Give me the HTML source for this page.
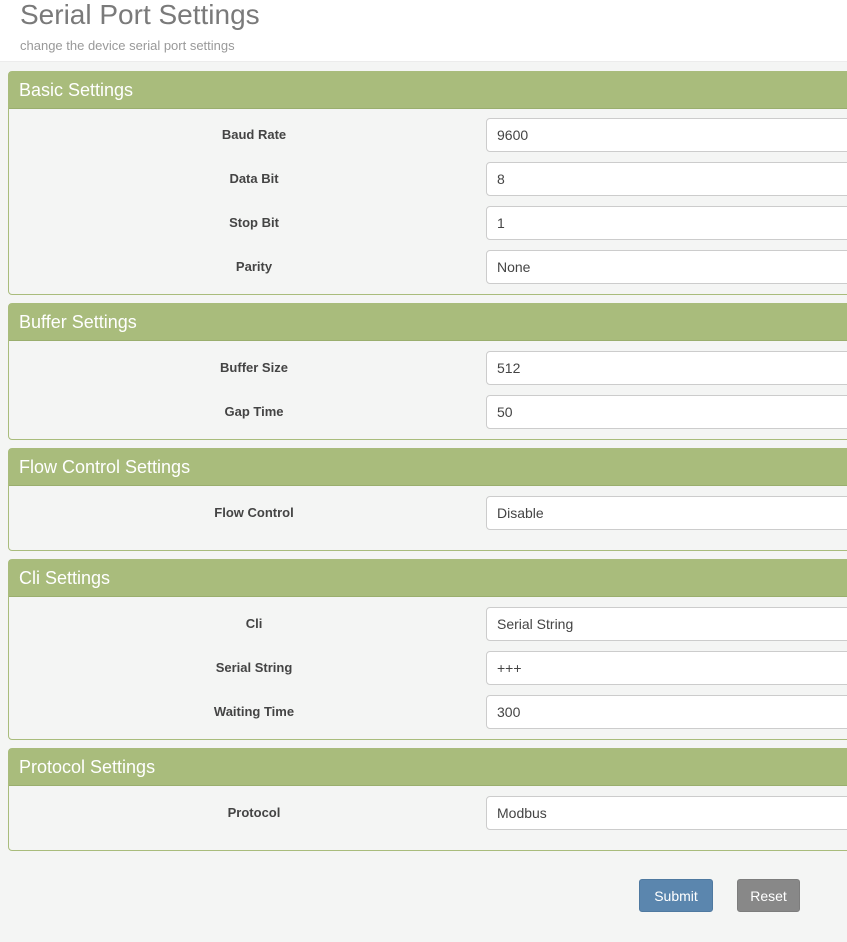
<!DOCTYPE html>
<html><head><style>
body{margin:0;width:847px;height:942px;background:#f4f5f4;font-family:"Liberation Sans",sans-serif;overflow:hidden;position:relative}
.hd{position:absolute;left:0;top:0;width:847px;height:61px;background:#fff;border-bottom:1px solid #ececec}
.t{position:absolute;left:20px;top:-1px;font-size:28px;color:#7a7a7a;font-weight:300}
.s{position:absolute;left:20px;top:38px;font-size:13px;color:#999}
.p{position:absolute;left:8px;width:860px;border:1px solid #a9bc7c;border-radius:4px;background:#f4f5f4;box-sizing:border-box}
.ph{height:37px;background:#a9bc7c;color:#fff;font-size:18px;line-height:36px;padding-left:10px;border-bottom:1px solid #9aae6e;box-sizing:border-box}
.r{position:absolute;left:0;width:860px;height:34px}
.l{position:absolute;left:145px;width:200px;text-align:center;font-weight:bold;font-size:13px;color:#444;top:9px}
.i{position:absolute;left:477px;width:400px;height:34px;background:#fff;border:1px solid #ccc;border-radius:4px;box-sizing:border-box;font-size:14px;color:#444;padding:8px 10px;line-height:16px}
.b{position:absolute;top:879px;height:33px;border-radius:3px;color:#fff;font-size:14px;text-align:center;line-height:33px;box-sizing:border-box}
</style></head><body>
<div class="hd"><div class="t">Serial Port Settings</div><div class="s">change the device serial port settings</div></div>

<div class="p" style="top:71px;height:224px"><div class="ph">Basic Settings</div>
<div class="r" style="top:46px"><div class="l">Baud Rate</div><div class="i">9600</div></div>
<div class="r" style="top:90px"><div class="l">Data Bit</div><div class="i">8</div></div>
<div class="r" style="top:134px"><div class="l">Stop Bit</div><div class="i">1</div></div>
<div class="r" style="top:178px"><div class="l">Parity</div><div class="i">None</div></div>
</div>

<div class="p" style="top:303px;height:137px"><div class="ph">Buffer Settings</div>
<div class="r" style="top:47px"><div class="l">Buffer Size</div><div class="i">512</div></div>
<div class="r" style="top:91px"><div class="l">Gap Time</div><div class="i">50</div></div>
</div>

<div class="p" style="top:448px;height:103px"><div class="ph">Flow Control Settings</div>
<div class="r" style="top:47px"><div class="l">Flow Control</div><div class="i">Disable</div></div>
</div>

<div class="p" style="top:559px;height:181px"><div class="ph">Cli Settings</div>
<div class="r" style="top:47px"><div class="l">Cli</div><div class="i">Serial String</div></div>
<div class="r" style="top:91px"><div class="l">Serial String</div><div class="i">+++</div></div>
<div class="r" style="top:135px"><div class="l">Waiting Time</div><div class="i">300</div></div>
</div>

<div class="p" style="top:748px;height:103px"><div class="ph">Protocol Settings</div>
<div class="r" style="top:47px"><div class="l">Protocol</div><div class="i">Modbus</div></div>
</div>

<div class="b" style="left:639px;width:74px;background:#5b86ae;border:1px solid #4f79a0">Submit</div>
<div class="b" style="left:737px;width:63px;background:#888;border:1px solid #7d7d7d">Reset</div>
</body></html>
